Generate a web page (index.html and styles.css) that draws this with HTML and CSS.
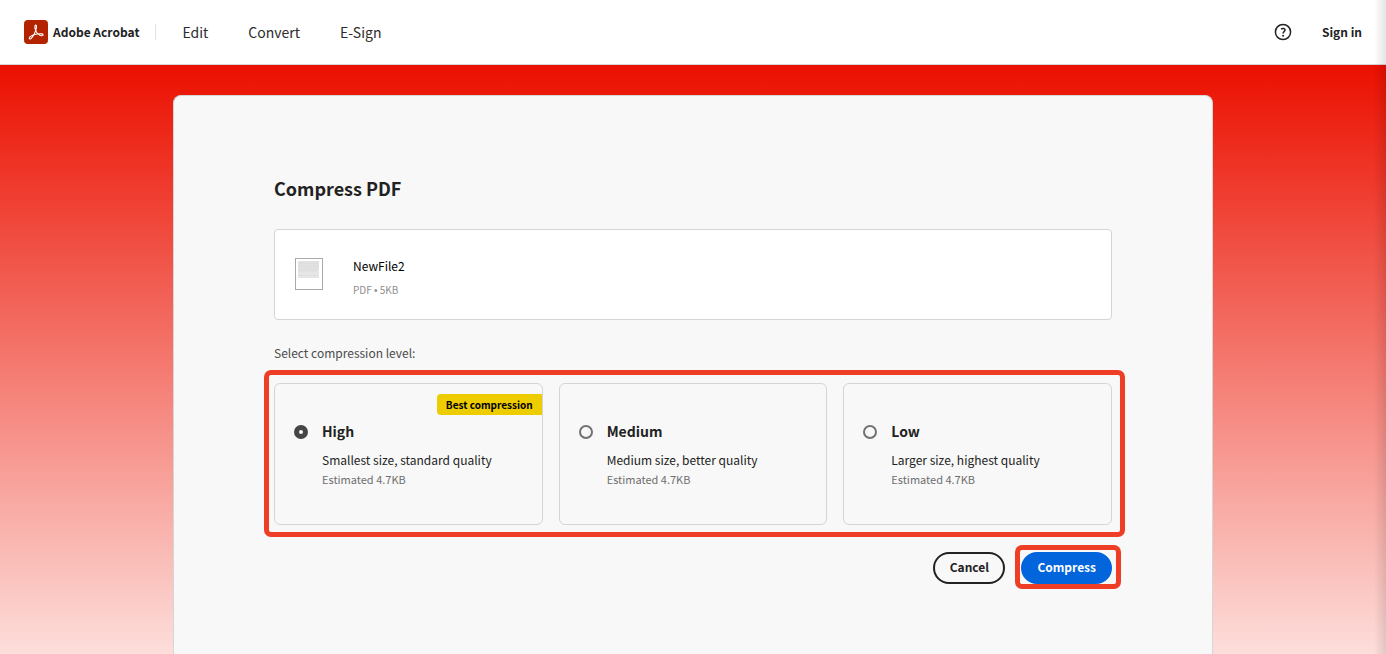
FILE: index.html
```html
<!DOCTYPE html>
<html lang="en">
<head>
<meta charset="utf-8">
<meta name="viewport" content="width=device-width, initial-scale=1">
<title>Compress PDF</title>
<link rel="stylesheet" href="styles.css">
</head>
<body>
<header class="topbar">
  <a class="brand" href="#">
    <svg class="brand-logo" viewBox="0 0 24 24" aria-hidden="true">
      <rect width="24" height="24" rx="4" fill="#b32300"/>
      <path d="M5.600 18.800C4.600 18 6.400 15.900 9.200 15C11.800 14.200 15.500 13.500 17.900 13.900C19.900 14.300 19.100 16.100 17.400 15.700C14.900 15.100 12.200 12.200 11.300 9.300C10.700 7.200 10.600 5.100 11.700 5.100C12.900 5.100 12.500 7.600 11.900 9.800C11 12.900 9.100 16.400 7.500 18.200C6.800 19 6.100 19.200 5.600 18.800Z" fill="none" stroke="#fff" stroke-width="1.100" stroke-linejoin="round"/>
    </svg>
    <span>Adobe Acrobat</span>
  </a>
  <nav class="menu">
    <a href="#">Edit</a>
    <a href="#">Convert</a>
    <a href="#">E-Sign</a>
  </nav>
  <div class="account">
    <button class="help" type="button" aria-label="Help">
      <svg viewBox="0 0 18 18" aria-hidden="true">
        <circle cx="9" cy="9" r="7.600" fill="none" stroke="#222" stroke-width="1.500"/>
        <path d="M7 6.100C8.600 5 11 5.300 11 7C11 8.500 9.100 8.600 9.100 10.500" fill="none" stroke="#222" stroke-width="1.600"/>
        <circle cx="9.100" cy="12.700" r="1" fill="#222"/>
      </svg>
    </button>
    <a class="signin" href="#">Sign in</a>
  </div>
</header>
<main class="stage">
  <form class="panel">
    <h1 class="title">Compress PDF</h1>
    <div class="file">
      <svg class="thumb" viewBox="0 0 28 32" aria-hidden="true">
        <rect x=".5" y=".5" width="27" height="31" fill="#fff" stroke="#aaa"/>
        <path d="M3 3H24V13H23V14H3Z" fill="#e1e1e1"/>
        <path d="M3 14H24V20H3Z" fill="#e6e6e6"/>
        <path d="M4 5.500H23M4 8.500H24M4 11.500H22M4 17.500H23" stroke="#dcdcdc" stroke-dasharray="3 1 2 1"/>
      </svg>
      <div>
        <p class="file-name">NewFile2</p>
        <p class="file-meta">PDF <span class="dot">•</span> 5KB</p>
      </div>
    </div>
    <p class="prompt" id="level-label">Select compression level:</p>
    <div class="levels" role="radiogroup" aria-labelledby="level-label">
      <label class="level">
        <input class="radio" type="radio" name="level" checked>
        <span class="level-text">
          <span class="level-name">High</span>
          <span class="level-desc">Smallest size, standard quality</span>
          <span class="level-size">Estimated 4.7KB</span>
        </span>
        <span class="badge">Best compression</span>
      </label>
      <label class="level">
        <input class="radio" type="radio" name="level">
        <span class="level-text">
          <span class="level-name">Medium</span>
          <span class="level-desc">Medium size, better quality</span>
          <span class="level-size">Estimated 4.7KB</span>
        </span>
      </label>
      <label class="level">
        <input class="radio" type="radio" name="level">
        <span class="level-text">
          <span class="level-name">Low</span>
          <span class="level-desc">Larger size, highest quality</span>
          <span class="level-size">Estimated 4.7KB</span>
        </span>
      </label>
    </div>
    <div class="actions">
      <button class="btn btn-outline" type="button">Cancel</button>
      <span class="primary-wrap"><button class="btn btn-primary" type="button">Compress</button></span>
    </div>
  </form>
</main>
<div class="edge-shade"></div>
</body>
</html>
```
FILE: styles.css
```css
* { box-sizing: border-box; }

body {
  margin: 0;
  min-height: 100vh;
  display: flex;
  flex-direction: column;
  font-family: "Noto Sans CJK SC", "Open Sans", sans-serif;
  font-size: 12px;
  line-height: 20px;
  color: #222;
}

h1, p { margin: 0; }
a { color: inherit; text-decoration: none; }
button { font: inherit; color: inherit; cursor: pointer; }

.topbar {
  display: flex;
  align-items: center;
  height: 65px;
  padding: 0 24px;
  background: #fff;
  border-bottom: 1px solid #d5d5d5;
}
.brand {
  display: flex;
  align-items: center;
  gap: 5px;
  font-weight: 700;
}
.brand-logo { width: 24px; height: 24px; }
.menu {
  display: flex;
  align-items: center;
  gap: 40px;
  margin-left: 16px;
  font-size: 14px;
  color: #2c2c2c;
}
.menu::before {
  content: "";
  width: 1px;
  height: 16px;
  margin-right: -14px;
  background: #e1e1e1;
}
.account {
  display: flex;
  align-items: center;
  gap: 30px;
  margin-left: auto;
}
.help {
  display: flex;
  padding: 0;
  border: 0;
  background: none;
}
.help svg { width: 18px; height: 18px; }
.signin { font-weight: 700; }

.stage {
  flex: 1;
  display: flex;
  justify-content: center;
  padding-top: 30px;
  background: linear-gradient(#eb1000, #fddedb);
}
.panel {
  width: 100%;
  max-width: 1040px;
  padding: 80px 100px 69px;
  background: #f8f8f8;
  border: 1px solid #d5d5d5;
  border-bottom: 0;
  border-radius: 8px 8px 0 0;
}
.title {
  margin-bottom: 29px;
  font-size: 18px;
  line-height: 24px;
  font-weight: 700;
}
.file {
  display: flex;
  align-items: flex-start;
  gap: 30px;
  padding: 28px 20px 20px;
  background: #fff;
  border: 1px solid #d5d5d5;
  border-radius: 4px;
}
.thumb { width: 28px; height: 32px; }
.file-name { line-height: 16px; color: #000; }
.file-meta {
  margin-top: 8px;
  font-size: 10px;
  line-height: 16px;
  color: #8e8e8e;
}
.dot { font-family: "Liberation Sans", sans-serif; }
.prompt { margin: 23px 0 20px; color: #4b4b4b; }

.levels {
  position: relative;
  display: grid;
  grid-template-columns: repeat(3, 1fr);
  gap: 16px;
}
.levels::after,
.primary-wrap::after {
  content: "";
  position: absolute;
  border: 5px solid #ee3f26;
  border-radius: 7px;
  pointer-events: none;
}
.levels::after { inset: -13px -13px -12px -10px; }
.primary-wrap::after { inset: -7px -9px -5px -6px; }

.level {
  position: relative;
  display: flex;
  gap: 14px;
  padding: 35px 19px 36px;
  border: 1px solid #d5d5d5;
  border-radius: 6px;
}
.radio {
  appearance: none;
  flex: none;
  width: 14px;
  height: 14px;
  margin: 6px 0;
  border: 2px solid #717171;
  border-radius: 50%;
  background: #f8f8f8;
}
.radio:checked { border: 5px solid #464646; }
.level-text { display: flex; flex-direction: column; }
.level-name {
  margin-bottom: 7px;
  font-size: 14px;
  line-height: 24px;
  font-weight: 700;
}
.level-size { font-size: 11px; line-height: 18px; color: #6e6e6e; }
.badge {
  position: absolute;
  top: 10px;
  right: 0;
  padding: 0 9px;
  border-radius: 4px 0 0 4px;
  background: #edcc00;
  color: #000;
  font-size: 10px;
  line-height: 21px;
  font-weight: 700;
}

.actions {
  display: flex;
  justify-content: flex-end;
  gap: 16px;
  margin-top: 27px;
}
.primary-wrap { position: relative; display: flex; }
.btn {
  min-width: 72px;
  height: 32px;
  padding: 0 14px 2px;
  border: 2px solid #222;
  border-radius: 16px;
  background: none;
  font-weight: 700;
  line-height: 20px;
}
.btn-primary {
  border-color: #0265dc;
  background: #0265dc;
  color: #fff;
}

.edge-shade {
  position: fixed;
  inset: 0 0 0 auto;
  width: 12px;
  background: linear-gradient(to right, transparent, rgba(0, 0, 0, 0.1));
  pointer-events: none;
}
```
